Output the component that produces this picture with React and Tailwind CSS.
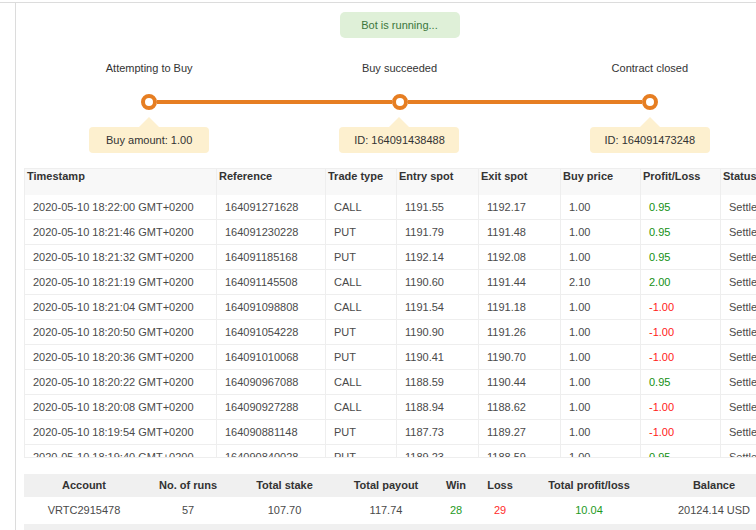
const steps = [
    { label: 'Attempting to Buy', info: 'Buy amount: 1.00', first: true },
    { label: 'Buy succeeded', info: 'ID: 164091438488' },
    { label: 'Contract closed', info: 'ID: 164091473248', last: true },
];

const headers = ['Timestamp', 'Reference', 'Trade type', 'Entry spot', 'Exit spot', 'Buy price', 'Profit/Loss', 'Status'];

const trades = [
    ['2020-05-10 18:22:00 GMT+0200', '164091271628', 'CALL', '1191.55', '1192.17', '1.00', '0.95'],
    ['2020-05-10 18:21:46 GMT+0200', '164091230228', 'PUT', '1191.79', '1191.48', '1.00', '0.95'],
    ['2020-05-10 18:21:32 GMT+0200', '164091185168', 'PUT', '1192.14', '1192.08', '1.00', '0.95'],
    ['2020-05-10 18:21:19 GMT+0200', '164091145508', 'CALL', '1190.60', '1191.44', '2.10', '2.00'],
    ['2020-05-10 18:21:04 GMT+0200', '164091098808', 'CALL', '1191.54', '1191.18', '1.00', '-1.00'],
    ['2020-05-10 18:20:50 GMT+0200', '164091054228', 'PUT', '1190.90', '1191.26', '1.00', '-1.00'],
    ['2020-05-10 18:20:36 GMT+0200', '164091010068', 'PUT', '1190.41', '1190.70', '1.00', '-1.00'],
    ['2020-05-10 18:20:22 GMT+0200', '164090967088', 'CALL', '1188.59', '1190.44', '1.00', '0.95'],
    ['2020-05-10 18:20:08 GMT+0200', '164090927288', 'CALL', '1188.94', '1188.62', '1.00', '-1.00'],
    ['2020-05-10 18:19:54 GMT+0200', '164090881148', 'PUT', '1187.73', '1189.27', '1.00', '-1.00'],
    ['2020-05-10 18:19:40 GMT+0200', '164090840028', 'PUT', '1189.23', '1188.59', '1.00', '0.95'],
];

const summary = [
    { label: 'Account', value: 'VRTC2915478', cls: 'w-[112px] pl-[8px]' },
    { label: 'No. of runs', value: '57', cls: 'w-[100px] pl-[4px]' },
    { label: 'Total stake', value: '107.70', cls: 'w-[100px] pr-[3px]' },
    { label: 'Total payout', value: '117.74', cls: 'w-[94px] pl-[6px]' },
    { label: 'Win', value: '28', cls: 'w-[48px] pl-[4px]', color: 'text-[#1e9a1e]' },
    { label: 'Loss', value: '29', cls: 'w-[46px] pr-[2px]', color: 'text-[#ff2b2b]' },
    { label: 'Total profit/loss', value: '10.04', cls: 'w-[128px] pl-[2px]', color: 'text-[#1e9a1e]' },
    { label: 'Balance', value: '20124.14 USD', cls: 'w-[124px]' },
];

const cols = 'grid grid-cols-[192px_109px_71px_82px_82px_80px_80px_80px]';

function Step({ step }) {
    return (
        <div className="flex flex-col items-center">
            <div className="mt-[23px] leading-[14px] text-[#333]">{step.label}</div>
            {/* circle sitting on the orange line */}
            <div className="mt-[19px] flex w-full items-center">
                <div className={`h-[4px] flex-1 ${step.first ? 'bg-transparent' : 'bg-[#e67e22]'}`}></div>
                <div className="h-[16px] w-[16px] shrink-0 rounded-full border-[4px] border-[#e67e22] bg-white"></div>
                <div className={`h-[4px] flex-1 ${step.last ? 'bg-transparent' : 'bg-[#e67e22]'}`}></div>
            </div>
            <div className="mt-[7px] h-0 w-0 border-x-[10px] border-b-[10px] border-x-transparent border-b-[#fdf0cf]"></div>
            <div className="flex h-[26px] w-[120px] items-center justify-center rounded-[4px] bg-[#fdf0cf] text-[#333]">
                {step.info}
            </div>
        </div>
    );
}

export default function App() {
    return (
        <div className="h-[530px] w-[756px] overflow-hidden bg-white font-['Liberation_Sans',Arial,sans-serif] text-[11px]">
            <div className="mt-[2px] flex h-full border-t border-[#dcdcdc]">
                <div className="w-[15px] shrink-0"></div>
                <div className="min-w-0 flex-1 border-l border-[#dcdcdc]">
                    <div className="w-[820px] pl-[8px]">
                        {/* Estado del bot */}
                        <div className="flex w-[751px] justify-center">
                            <div className="mt-[9px] flex h-[26px] w-[120px] items-center justify-center rounded-[5px] bg-[#dff0d8] text-[#3c763d]">
                                Bot is running...
                            </div>
                        </div>

                        {/* Línea de tiempo */}
                        <div className="grid w-[751px] grid-cols-3">
                            {steps.map((s) => (
                                <Step key={s.label} step={s} />
                            ))}
                        </div>

                        {/* Tabla de operaciones */}
                        <div className="mt-[15px]">
                            <div className={`${cols} h-[27px] border-t border-[#eee] bg-[#f8f8f8]`}>
                                {headers.map((h) => (
                                    <div key={h} className="border-l border-[#eee] pl-[2px] pt-[1px] font-bold leading-[13px] text-[#333]">
                                        {h}
                                    </div>
                                ))}
                            </div>
                            <div className="h-[263px] overflow-hidden border-b border-[#eee]">
                                {trades.map((t) => (
                                    <div key={t[1]} className={`${cols} h-[25px] border-b border-[#eee] text-[#4a4a4a]`}>
                                        {t.map((v, i) => (
                                            <div
                                                key={i}
                                                className={`flex items-center border-l border-[#eee] pl-[8px] ${
                                                    i === 6 ? (v.startsWith('-') ? 'text-[#ff1a1a]' : 'text-[#138f13]') : ''
                                                }`}
                                            >
                                                {v}
                                            </div>
                                        ))}
                                        <div className="flex items-center border-l border-[#eee] pl-[8px]">Settled</div>
                                    </div>
                                ))}
                            </div>
                        </div>

                        {/* Resumen */}
                        <div className="mt-[16px]">
                            <div className="flex h-[23px] items-center bg-[#f0f0f0] font-bold text-[#333]">
                                {summary.map((c) => (
                                    <div key={c.label} className={`${c.cls} shrink-0 text-center`}>
                                        {c.label}
                                    </div>
                                ))}
                            </div>
                            <div className="flex h-[27px] items-center bg-white text-[#4a4a4a]">
                                {summary.map((c) => (
                                    <div key={c.label} className={`${c.cls} shrink-0 text-center ${c.color ?? ''}`}>
                                        {c.value}
                                    </div>
                                ))}
                            </div>
                            <div className="h-[6px] bg-[#f0f0f0]"></div>
                        </div>
                    </div>
                </div>
            </div>
        </div>
    );
}
